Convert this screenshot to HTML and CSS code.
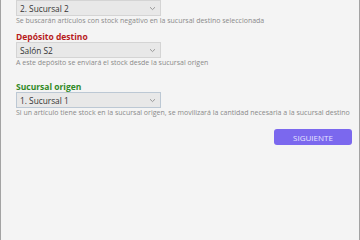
FILE: index.html
```html
<!DOCTYPE html>
<html lang="es">
<head>
    <meta charset="UTF-8">
    <title>Transferencia de stock</title>
    <link rel="stylesheet" href="styles.css">
</head>
<body>

<div class="panel">
    <div class="field">
        <div class="select">
            <span>2. Sucursal 2</span>
            <svg class="chevron" width="7" height="5" viewBox="0 0 7 5"><path d="M1 1.2 L3.5 3.6 L6 1.2" fill="none" stroke="#999" stroke-width="1"/></svg>
        </div>
        <p class="hint">Se buscarán artículos con stock negativo en la sucursal destino seleccionada</p>
    </div>

    <div class="field field-second">
        <label class="label label-red">Depósito destino</label>
        <div class="select">
            <span>Salón S2</span>
            <svg class="chevron" width="7" height="5" viewBox="0 0 7 5"><path d="M1 1.2 L3.5 3.6 L6 1.2" fill="none" stroke="#999" stroke-width="1"/></svg>
        </div>
        <p class="hint">A este depósito se enviará el stock desde la sucursal origen</p>
    </div>

    <div class="field field-spaced">
        <label class="label label-green">Sucursal origen</label>
        <div class="select select-focus">
            <span>1. Sucursal 1</span>
            <svg class="chevron" width="7" height="5" viewBox="0 0 7 5"><path d="M1 1.2 L3.5 3.6 L6 1.2" fill="none" stroke="#999" stroke-width="1"/></svg>
        </div>
        <p class="hint">Si un artículo tiene stock en la sucursal origen, se movilizará la cantidad necesaria a la sucursal destino</p>
    </div>

    <div class="actions">
        <button class="btn">SIGUIENTE</button>
    </div>
</div>

</body>
</html>
```

FILE: styles.css
```css
body {
    margin: 0;
    padding: 0;
    font-family: 'Open Sans', 'Noto Sans', sans-serif;
    background-color: #f4f4f4;
}
.panel {
    height: 240px;
    box-sizing: border-box;
    border-left: 1px solid #a3a3a3;
    border-right: 1px solid #a3a3a3;
    background-color: #f4f4f4;
    padding: 0 7px 0 15px;
    display: flex;
    flex-direction: column;
}
.field {
    display: flex;
    flex-direction: column;
}
.field-second {
    margin-top: 5px;
}
.field-spaced {
    margin-top: 13px;
}
.label {
    font-size: 8.5px;
    font-weight: bold;
    line-height: 11px;
    height: 11px;
}
.label-red {
    color: #b81c1c;
}
.label-green {
    color: #318a26;
}
.select {
    width: 145px;
    height: 16px;
    box-sizing: border-box;
    border: 1px solid #d4d4d4;
    background-color: #e8e8e8;
    display: flex;
    align-items: center;
    justify-content: space-between;
    padding: 0 4px 0 3px;
    font-size: 8.3px;
    color: #333;
}
.select-focus {
    border-color: #bcc8d4;
}
.hint {
    margin: 0;
    font-size: 7px;
    line-height: 10px;
    color: #8a8a8a;
    white-space: nowrap;
}
.actions {
    display: flex;
    justify-content: flex-end;
    margin-top: 11px;
}
.btn {
    width: 78px;
    height: 16px;
    border: none;
    border-radius: 3px;
    background-color: #7b68ee;
    color: #e6e2ff;
    font-family: 'Open Sans', 'Noto Sans', sans-serif;
    font-size: 8px;
    padding: 0;
}
```
